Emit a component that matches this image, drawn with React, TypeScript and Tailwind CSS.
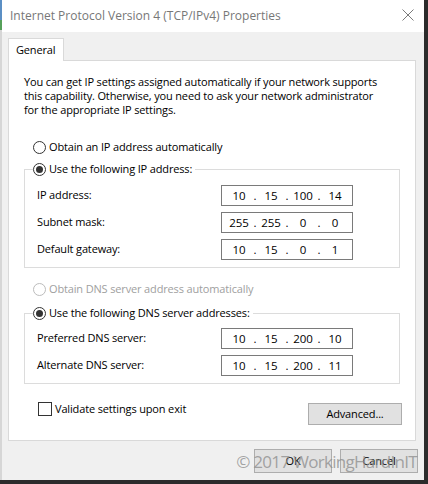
import React from "react";

const font = { fontFamily: '"Open Sans", "Noto Sans", sans-serif' };

function Radio({ checked, disabled }: { checked?: boolean; disabled?: boolean }) {
  return (
    <span
      className={`w-[13px] h-[13px] rounded-full border bg-white flex items-center justify-center shrink-0 ${
        disabled ? "border-[#bcbcbc]" : "border-[#333]"
      }`}
    >
      {checked && <span className="w-[7px] h-[7px] rounded-full bg-[#333]" />}
    </span>
  );
}

function IpField({ octets }: { octets: string[] }) {
  return (
    <div className="w-[132px] h-[21px] border border-[#7a7a7a] bg-white flex items-center pl-[6px] text-[11.5px] tracking-normal text-black">
      {octets.map((o, i) => (
        <React.Fragment key={i}>
          {i > 0 && <span className="w-[10px] text-center">.</span>}
          <span className="w-[22px] text-center">{o}</span>
        </React.Fragment>
      ))}
    </div>
  );
}

function Row({ label, octets }: { label: string; octets: string[] }) {
  return (
    <div className="flex items-center justify-between h-[21px] pl-[12px] pr-[46px]">
      <span>{label}</span>
      <IpField octets={octets} />
    </div>
  );
}

function Legend({ label }: { label: string }) {
  return (
    <div className="relative z-10 h-[14px] flex">
      <div className="ml-[9px] bg-white flex items-center gap-[3px] pr-[3px]">
        <Radio checked />
        <span>{label}</span>
      </div>
    </div>
  );
}

export default function App() {
  return (
    <div
      className="w-[428px] h-[484px] flex flex-col bg-[#2c2c2c] overflow-hidden text-[11px] tracking-[-0.15px] text-black"
      style={font}
    >
      <div className="flex flex-1">
        {/* left edge of background */}
        <div className="w-[2px] flex flex-col bg-[#d6d6d6]">
          <div className="h-[20px] bg-[#5b8fc4]" />
          <div className="h-[10px] bg-[#56a05a]" />
        </div>

        <div className="w-[422px] flex flex-col bg-[#f0f0f0]">
          {/* Title bar */}
          <div className="h-[32px] bg-white flex items-center justify-between pl-[8px] pr-[10px]">
            <span className="text-[12px] tracking-normal text-[#777]">Internet Protocol Version 4 (TCP/IPv4) Properties</span>
            <svg width="12" height="12" viewBox="0 0 12 12" className="mt-[-2px]">
              <path d="M0.5 0.5 L11.5 11.5 M11.5 0.5 L0.5 11.5" stroke="#7a7a7a" strokeWidth="1" />
            </svg>
          </div>

          <div className="flex-1 flex flex-col pl-[6px] pr-[8px] pt-[6px]">
            {/* Tab */}
            <div className="relative z-10 w-[56px] h-[23px] -mb-px border border-b-0 border-[#d9d9d9] bg-white flex items-center pl-[7px]">
              General
            </div>

            {/* Panel */}
            <div className="h-[381px] border border-[#d9d9d9] bg-white flex flex-col px-[15px] pt-[14px]">
              <p className="leading-[14px] whitespace-nowrap">
                You can get IP settings assigned automatically if your network supports
                <br />
                this capability. Otherwise, you need to ask your network administrator
                <br />
                for the appropriate IP settings.
              </p>

              <div className="mt-[23px] h-[14px] flex items-center gap-[3px] pl-[9px]">
                <Radio />
                <span>Obtain an IP address automatically</span>
              </div>

              <div className="mt-[8px]">
                <Legend label="Use the following IP address:" />
                <div className="-mt-[7px] border border-[#dcdcdc] pt-[15px] pb-[7px] flex flex-col gap-[6px]">
                  <Row label="IP address:" octets={["10", "15", "100", "14"]} />
                  <Row label="Subnet mask:" octets={["255", "255", "0", "0"]} />
                  <Row label="Default gateway:" octets={["10", "15", "0", "1"]} />
                </div>
              </div>

              <div className="mt-[14px] h-[14px] flex items-center gap-[3px] pl-[9px] text-[#a0a0a0]">
                <Radio disabled />
                <span>Obtain DNS server address automatically</span>
              </div>

              <div className="mt-[10px]">
                <Legend label="Use the following DNS server addresses:" />
                <div className="-mt-[7px] border border-[#dcdcdc] pt-[14px] pb-[7px] flex flex-col gap-[6px]">
                  <Row label="Preferred DNS server:" octets={["10", "15", "200", "10"]} />
                  <Row label="Alternate DNS server:" octets={["10", "15", "200", "11"]} />
                </div>
              </div>

              <div className="mt-[18px] flex justify-between items-start">
                <div className="flex items-center gap-[3px] pl-[14px] h-[14px]">
                  <span className="w-[14px] h-[14px] border border-[#333] bg-white" />
                  <span>Validate settings upon exit</span>
                </div>
                <button className="mt-[1px] mr-[-2px] w-[94px] h-[22px] bg-[#e1e1e1] border border-[#adadad] text-black">
                  Advanced...
                </button>
              </div>
            </div>

            {/* Buttons */}
            <div className="relative mt-[8px] flex justify-end gap-[8px] mr-[-2px]">
              <button className="w-[78px] h-[24px] bg-[#e1e1e1] border border-[#adadad] text-black">OK</button>
              <button className="w-[78px] h-[24px] bg-[#e1e1e1] border border-[#adadad] text-black">Cancel</button>
              <span className="absolute right-[1px] top-[1px] leading-[24px] text-[17px] text-[#8f8f8f]/80 whitespace-nowrap tracking-[-0.7px]">
                © 2017 WorkingHardInIT
              </span>
            </div>
          </div>
        </div>

        <div className="w-[4px] bg-[#2c2c2c]" />
      </div>
      <div className="h-[4px] bg-[#2c2c2c]" />
    </div>
  );
}
